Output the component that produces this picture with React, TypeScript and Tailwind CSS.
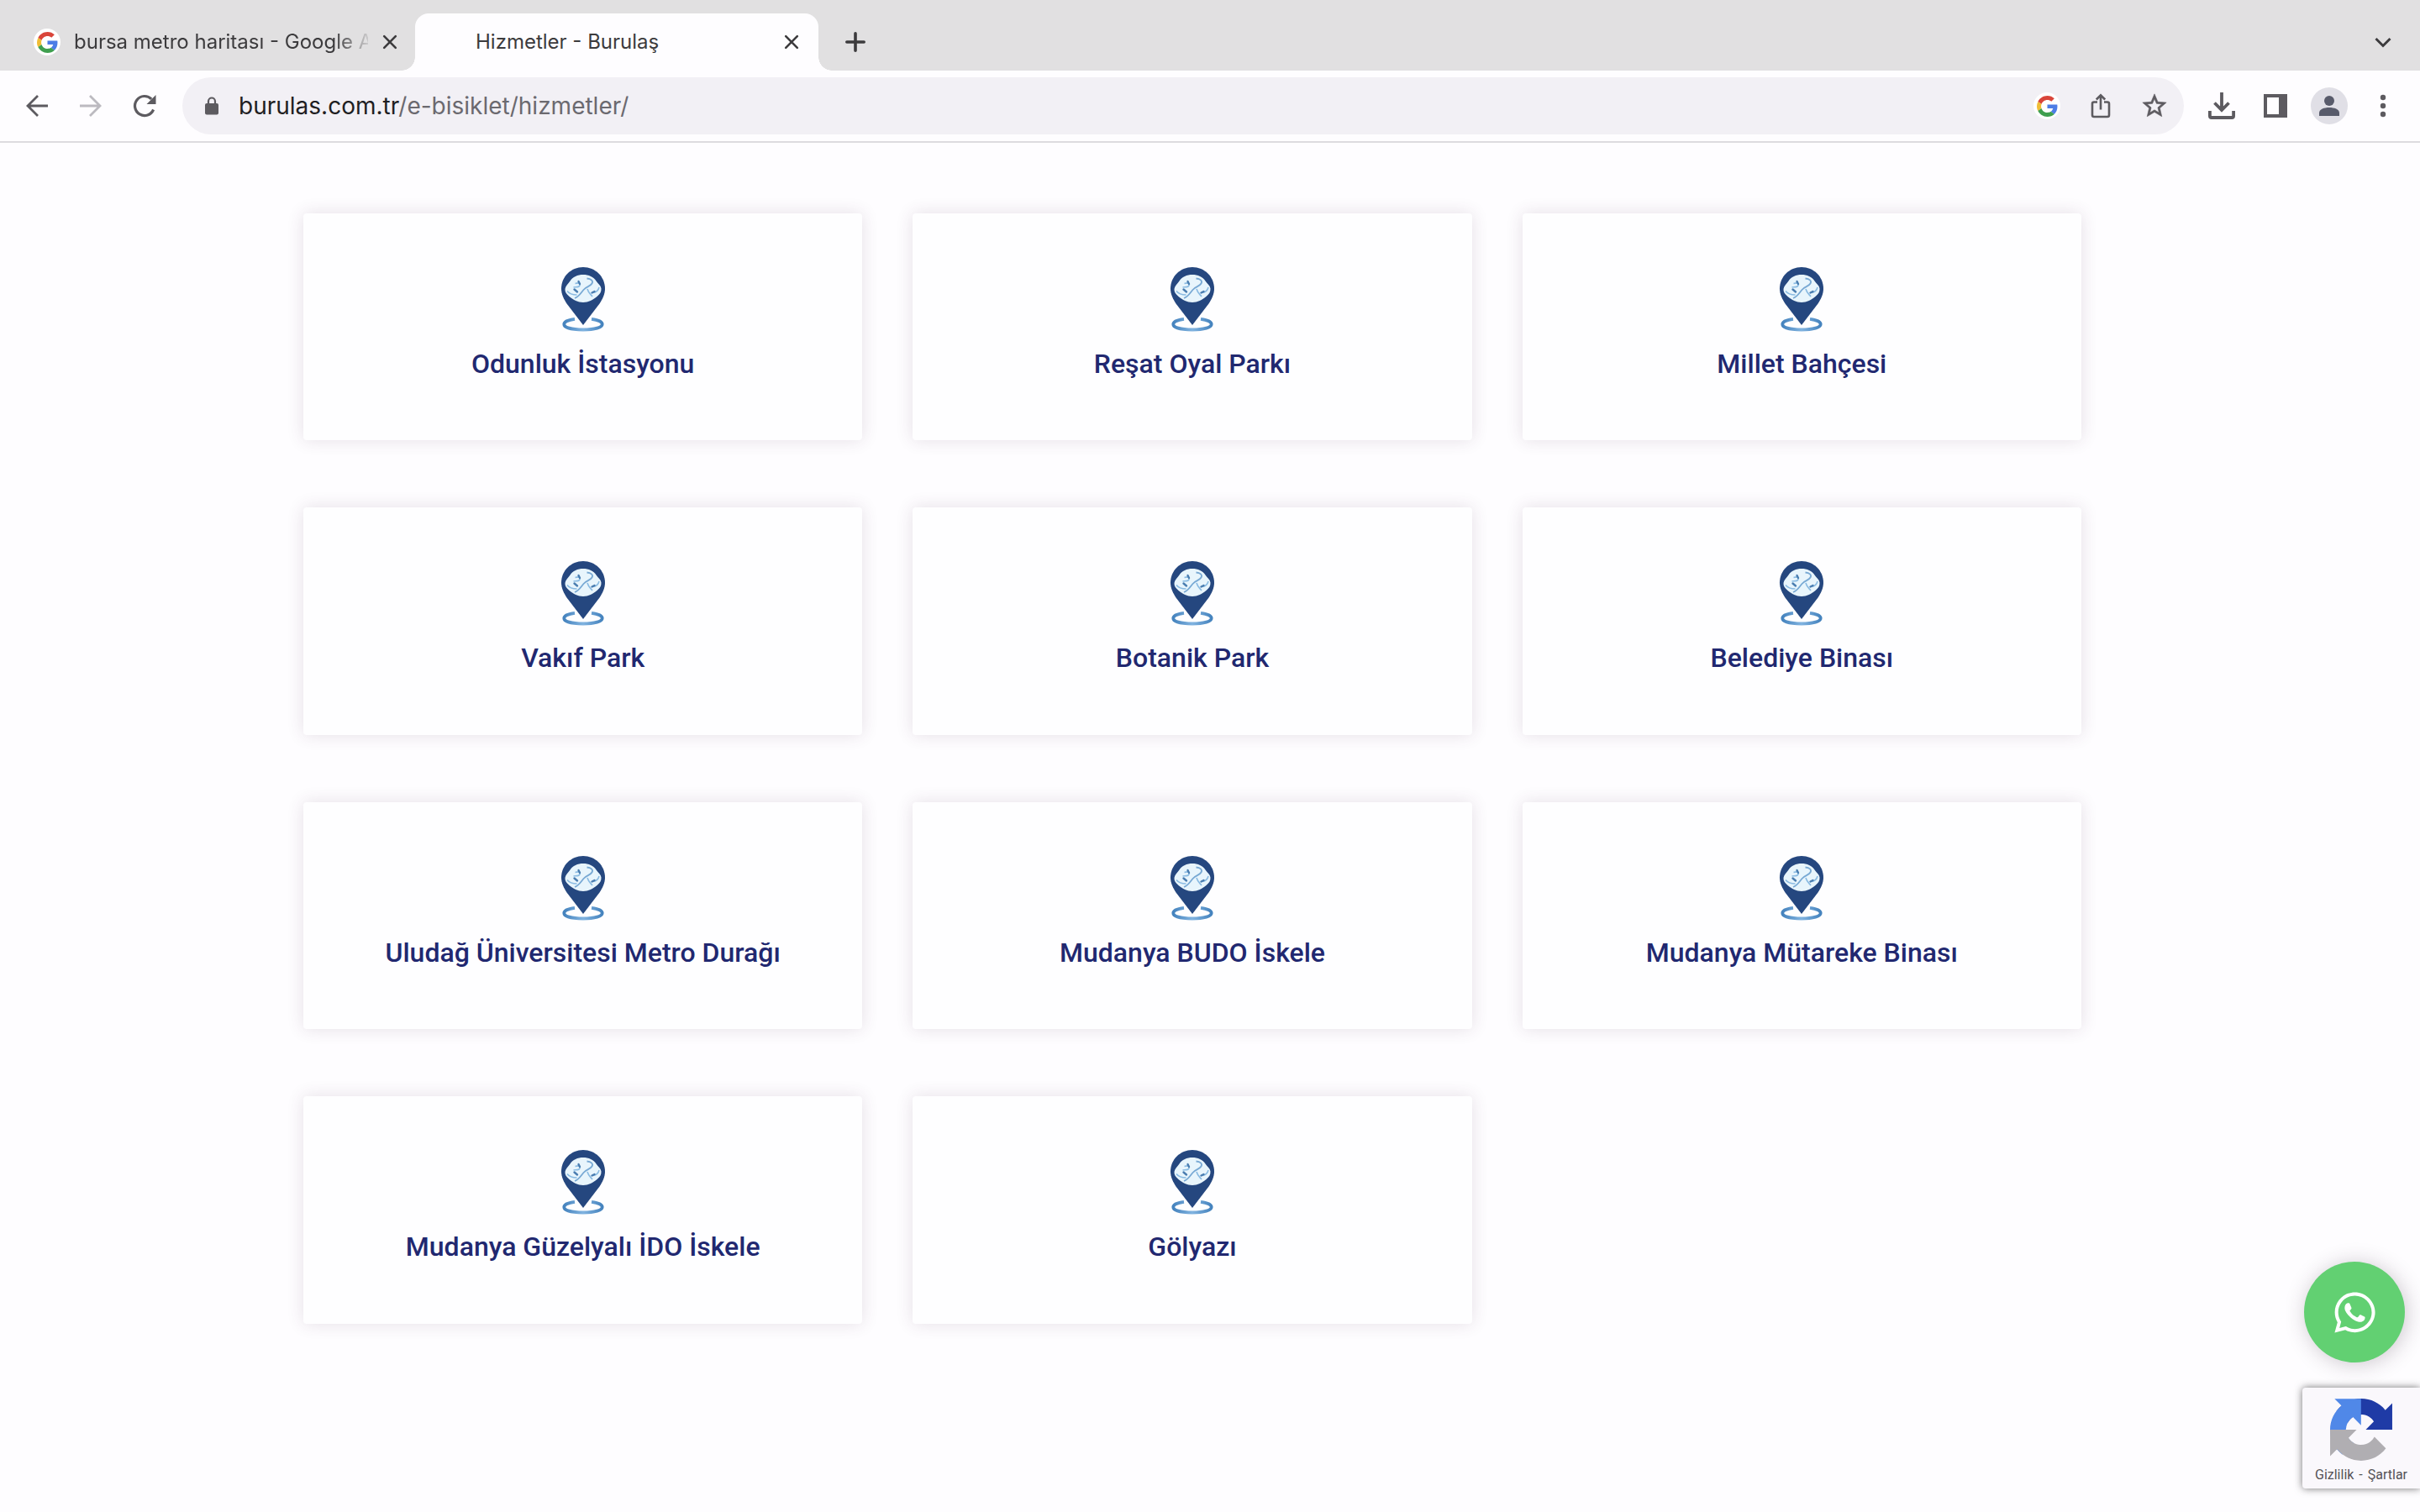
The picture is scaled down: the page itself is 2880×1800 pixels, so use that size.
import React from "react";
import { FaWhatsapp } from "react-icons/fa";

const stations = [
  "Odunluk İstasyonu",
  "Reşat Oyal Parkı",
  "Millet Bahçesi",
  "Vakıf Park",
  "Botanik Park",
  "Belediye Binası",
  "Uludağ Üniversitesi Metro Durağı",
  "Mudanya BUDO İskele",
  "Mudanya Mütareke Binası",
  "Mudanya Güzelyalı İDO İskele",
  "Gölyazı",
];

function GoogleIcon() {
  return (
    <span className="flex size-8 shrink-0 items-center justify-center rounded-full bg-white">
      <svg viewBox="0 0 48 48" className="size-[25px]">
        <path fill="#d9453a" d="M24 9.5c3.54 0 6.71 1.22 9.21 3.6l6.85-6.85C35.9 2.38 30.47 0 24 0 14.62 0 6.51 5.38 2.56 13.22l7.98 6.19C12.43 13.72 17.74 9.5 24 9.5z" />
        <path fill="#4d7de6" d="M46.98 24.55c0-1.57-.15-3.09-.38-4.55H24v9.02h12.94c-.58 2.96-2.26 5.48-4.78 7.18l7.73 6c4.51-4.18 7.09-10.36 7.09-17.65z" />
        <path fill="#f0bd35" d="M10.53 28.59c-.48-1.45-.76-2.99-.76-4.59s.27-3.14.76-4.59l-7.98-6.19C.92 16.46 0 20.12 0 24c0 3.88.92 7.54 2.56 10.78l7.97-6.19z" />
        <path fill="#3f9f4f" d="M24 48c6.48 0 11.93-2.13 15.89-5.81l-7.73-6c-2.15 1.45-4.92 2.3-8.16 2.3-6.26 0-11.57-4.22-13.47-9.91l-7.98 6.19C6.51 42.62 14.62 48 24 48z" />
      </svg>
    </span>
  );
}

function CloseIcon() {
  return (
    <svg viewBox="0 0 20 20" className="size-5 shrink-0" stroke="#3c3b3d" strokeWidth="2.6" strokeLinecap="round">
      <path d="M3.2 3.2 16.8 16.8M16.8 3.2 3.2 16.8" />
    </svg>
  );
}

function PinIcon() {
  return (
    <svg viewBox="0 0 54 78" className="h-[78px] w-[54px]" fill="none">
      <defs>
        <linearGradient id="ring" x1="0" y1="0" x2="1" y2="0">
          <stop offset="0" stopColor="#4583be" />
          <stop offset="0.5" stopColor="#80b3e0" />
          <stop offset="1" stopColor="#4583be" />
        </linearGradient>
      </defs>
      <path d="M17 62.8C8.500 63.800 4.300 66.300 4.300 69 4.300 72.800 13 75.500 27 75.500s22.700-2.700 22.700-6.500c0-2.700-4.200-5.200-12.700-6.200" stroke="url(#ring)" strokeWidth="3.8" />
      <path d="M27 1C12.5 1 1 12.5 1 26.5c0 7 3 12.500 6.500 18L27 70l19.500-25.500c3.500-5.500 6.500-11 6.500-18C53 12.500 41.500 1 27 1z" fill="#25477f" />
      <path d="M27 10c6.500 0 12.500 2.500 15.500 7.500 2.500 3.500 5.500 5.500 6 9 .3 4-1.500 6.500-5 9.500-5 4-10 7-16.500 7S15.500 40 10.500 36c-3.500-3-5.300-5.500-5-9 .5-3.500 3.500-6 6-9.500 3-5 9-7.500 15.500-7.500z" fill="#e8f5fc" />
      <path d="M17 38c5-2 7-6 10.500-10s8-4 10-7.500-1.500-5.500-6-6" stroke="#78a9d4" strokeWidth="1.8" />
      <path d="M17.500 20.500c4-1 6-1 5.500 2s-5 2-7.500 2.500M8 29.500c3 4 7 4.500 11.500 4.500M32 27c1 4 3 5.500 6 9M46 25c-1 4-3 6-7 6.500" stroke="#8abbe2" strokeWidth="1.6" />
      <path d="M16.500 27.500l3.500 3M37.500 31.500l3-1.500M21.500 18l1.500 3" stroke="#4a7db0" strokeWidth="2.4" strokeLinecap="round" />
    </svg>
  );
}

function TabStrip() {
  return (
    <div className="flex h-[84px] shrink-0 items-end bg-[#e1e0e1] text-[24px] text-[#3c3b3d]">
      <div className="flex h-[68px] w-[494px] items-center pl-10 pr-5">
        <GoogleIcon />
        <span className="ml-4 w-[350px] overflow-hidden whitespace-nowrap mask-r-from-[310px] mask-r-to-[356px]">
          bursa metro haritası - Google A
        </span>
        <span className="ml-4 flex">
          <CloseIcon />
        </span>
      </div>
      <div className="relative flex h-[68px] w-[480px] items-center rounded-t-[16px] bg-[#fefdff] pl-[72px] pr-[22px]">
        <span className="absolute -left-4 bottom-0 size-4 bg-[radial-gradient(circle_at_0_0,transparent_15.5px,#fefdff_16px)]" />
        <span className="absolute -right-4 bottom-0 size-4 bg-[radial-gradient(circle_at_100%_0,transparent_15.5px,#fefdff_16px)]" />
        <span className="whitespace-nowrap">Hizmetler - Burulaş</span>
        <span className="ml-auto flex">
          <CloseIcon />
        </span>
      </div>
      <div className="flex h-[68px] flex-1 items-center justify-between pl-8 pr-8">
        <svg viewBox="0 0 24 24" className="size-6" stroke="#3c3b3d" strokeWidth="3.6" strokeLinecap="round">
          <path d="M12 1.800v20.400M1.800 12h20.400" />
        </svg>
        <svg viewBox="0 0 24 24" className="size-6" fill="none" stroke="#3c3b3d" strokeWidth="3">
          <path d="M3.500 8 12 16.500 20.500 8" />
        </svg>
      </div>
    </div>
  );
}

function Toolbar() {
  return (
    <div className="flex h-[86px] shrink-0 items-center border-b-2 border-[#dddbdf] bg-[#fefdff] px-7">
      <div className="flex w-[189px] items-center gap-8">
        <svg viewBox="0 0 32 32" className="size-8" fill="none" stroke="#5d5b60" strokeWidth="2.8">
          <path d="M29 16H5M17 4 5 16l12 12" />
        </svg>
        <svg viewBox="0 0 32 32" className="size-8" fill="none" stroke="#bcbac0" strokeWidth="2.8">
          <path d="M3 16h24M15 4l12 12-12 12" />
        </svg>
        <svg viewBox="0 0 32 32" className="size-8" fill="none" stroke="#5d5b60" strokeWidth="3.2">
          <path d="M26.600 20.500a11.500 11.500 0 1 1-2.400-12.600" />
          <path d="M29.500 3v11h-11z" fill="#5d5b60" stroke="none" />
        </svg>
      </div>
      <div className="flex h-[68px] w-[2382px] items-center rounded-full bg-[#f2f0f5] pl-[27px] pr-[19px]">
        <svg viewBox="0 0 16 22" className="h-[22px] w-4" fill="none">
          <rect x="0" y="8" width="16" height="13.5" rx="2" fill="#5d5b60" />
          <path d="M4 9V5.500a4 4 0 0 1 8 0V9" stroke="#5d5b60" strokeWidth="2.2" />
        </svg>
        <span className="ml-6 whitespace-nowrap text-[28px] text-[#6b696f]">
          <span className="text-[#1f1e22]">burulas.com.tr</span>/e-bisiklet/hizmetler/
        </span>
        <div className="ml-auto flex items-center gap-8">
          <GoogleIcon />
          <svg viewBox="0 0 32 32" className="size-8" fill="none" stroke="#5d5b60" strokeWidth="2.6">
            <path d="M12 11.500H8a2 2 0 0 0-2 2V27a2 2 0 0 0 2 2h16a2 2 0 0 0 2-2V13.500a2 2 0 0 0-2-2h-4M16 20.500V4M10.800 8.500 16 3.300l5.200 5.200" />
          </svg>
          <svg viewBox="0 0 24 24" className="-mx-px size-[34px]" fill="#5d5b60" stroke="#5d5b60" strokeWidth="0.4">
            <path d="m22 9.240-7.190-.62L12 2 9.190 8.630 2 9.240l5.460 4.730L5.820 21 12 17.270 18.180 21l-1.630-7.030L22 9.240zM12 15.400l-3.760 2.270 1-4.280-3.320-2.880 4.380-.38L12 6.100l1.710 4.040 4.380.38-3.320 2.880 1 4.280L12 15.400z" />
          </svg>
        </div>
      </div>
      <div className="ml-auto flex items-center">
        <svg viewBox="0 0 32 32" className="size-8" fill="none" stroke="#5d5b60" strokeWidth="3.8">
          <path d="M16 0v21M7.500 12.500 16 21l8.500-8.500M1.900 22v6a2 2 0 0 0 2 2h24.200a2 2 0 0 0 2-2v-6" />
        </svg>
        <svg viewBox="0 0 28 28" className="ml-[34px] size-7">
          <path fill="#5d5b60" fillRule="evenodd" d="M0 0h28v28H0zM4 4v20h14V4z" />
        </svg>
        <span className="ml-7 flex size-11 items-center justify-center rounded-full bg-[#e0dfe6]">
          <svg viewBox="0 0 24 24" className="size-6" fill="#585b6b">
            <circle cx="12" cy="6" r="6" />
            <path d="M0 24v-3.500C0 16 6 14 12 14s12 2 12 6.500V24z" />
          </svg>
        </span>
        <svg viewBox="0 0 32 32" className="ml-[26px] size-8" fill="#5d5b60">
          <circle cx="16" cy="6" r="3.2" />
          <circle cx="16" cy="16" r="3.2" />
          <circle cx="16" cy="26" r="3.2" />
        </svg>
      </div>
    </div>
  );
}

function StationCard({ name }: { name: string }) {
  return (
    <div className="flex h-[270.4px] flex-col items-center rounded-[4px] bg-[#fefeff] pt-[63px] shadow-[0_0_20px_rgba(80,40,80,0.14)]">
      <PinIcon />
      <h3 className="mt-[18px] whitespace-nowrap text-[32px] font-medium leading-10 text-[#212870]">{name}</h3>
    </div>
  );
}

function Recaptcha() {
  return (
    <div className="absolute right-0 top-[1652px] flex h-[120px] w-[140px] flex-col items-center rounded-l-[4px] bg-[#faf8fc] pt-[13px] shadow-[0_0_10px_rgba(100,100,100,0.9)]">
      <svg viewBox="0 0 64 64" className="size-[74px]">
        <path fill="#1f3ba6" d="M64 31.955l-.033-1.370V4.687l-7.160 7.160C50.948 4.674 42.033.093 32.050.093c-10.400 0-19.622 4.960-25.458 12.640l11.736 11.860a15.550 15.550 0 0 1 4.754-5.334c2.050-1.600 4.952-2.906 8.968-2.906.485 0 .860.057 1.135.163 4.976.393 9.288 3.140 11.828 7.124l-8.307 8.307L64 31.953" />
        <path fill="#5088e8" d="M31.862.094l-1.370.033H4.594l7.160 7.160C4.580 13.147 0 22.060 0 32.046c0 10.400 4.960 19.622 12.640 25.458L24.500 45.768a15.550 15.550 0 0 1-5.334-4.754c-1.600-2.050-2.906-4.952-2.906-8.968 0-.485.057-.860.163-1.135.393-4.976 3.140-9.288 7.124-11.828l8.307 8.307L31.860.095" />
        <path fill="#b0aeb2" d="M.001 32.045l.033 1.370v25.898l7.160-7.160c5.860 7.173 14.774 11.754 24.760 11.754 10.400 0 19.622-4.960 25.458-12.640l-11.736-11.860a15.550 15.550 0 0 1-4.754 5.334c-2.050 1.600-4.952 2.906-8.968 2.906-.485 0-.860-.057-1.135-.163-4.976-.393-9.288-3.140-11.828-7.124l8.307-8.307c-10.522.040-22.400.066-27.295-.005" />
      </svg>
      <span className="mt-[7px] whitespace-nowrap text-[16px] leading-5 text-[#555356]">
        Gizlilik<span className="mx-[2px]"> - </span>Şartlar
      </span>
    </div>
  );
}

export default function App() {
  return (
    <div className="relative flex h-[1800px] w-[2880px] flex-col overflow-hidden bg-[#fefdff] font-['Roboto',sans-serif]">
      <header className="flex flex-col font-['Inter',sans-serif]">
        <TabStrip />
        <Toolbar />
      </header>
      <main className="grid w-[2477px] grid-cols-3 gap-x-[60px] gap-y-20 pl-[361px] pt-[84px]">
        {stations.map((name) => (
          <StationCard key={name} name={name} />
        ))}
      </main>
      <a className="absolute right-[18px] top-[1502px] flex size-[120px] items-center justify-center rounded-full bg-[#62d072] text-white shadow-[2px_2px_24px_rgba(60,40,60,0.25)]">
        <FaWhatsapp className="size-[55px]" />
      </a>
      <Recaptcha />
    </div>
  );
}
